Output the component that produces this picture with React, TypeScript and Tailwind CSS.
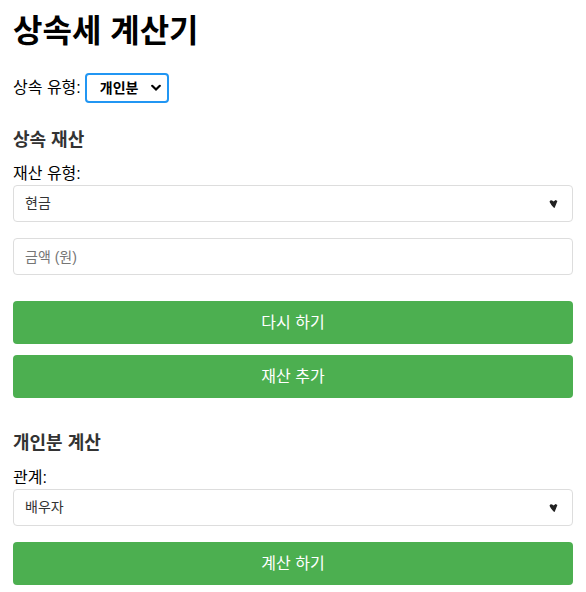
import { useState } from "react";

const font = { fontFamily: '"Liberation Sans", "Noto Sans CJK KR", sans-serif' };

function Arrow() {
  return (
    <svg
      className="pointer-events-none absolute right-[15px] top-1/2 -translate-y-1/2"
      width="9"
      height="9"
      viewBox="0 0 9 9"
    >
      <path d="M0.5 2.2 Q1.5 0 3.6 1.2 L4.6 2 L6.6 0.6 L8.4 1.6 L5.6 8.6 L4.6 8 Q2 5.5 0.5 2.2 Z" fill="#222" />
    </svg>
  );
}

function Select({ value, options }: { value: string; options: string[] }) {
  const [v, setV] = useState(value);
  return (
    <div className="relative">
      <select
        value={v}
        onChange={(e) => setV(e.target.value)}
        className="block h-[37px] w-full appearance-none rounded-[4px] border border-[#dddddd] bg-white pl-[11px] text-[14px] text-[#333] outline-none"
        style={font}
      >
        {options.map((o) => (
          <option key={o}>{o}</option>
        ))}
      </select>
      <Arrow />
    </div>
  );
}

function GreenButton({ label }: { label: string }) {
  return (
    <button className="h-[43px] w-full rounded-[4px] bg-[#4caf50] text-[16px] text-white" style={font}>
      {label}
    </button>
  );
}

export default function App() {
  const [type, setType] = useState("개인분");
  return (
    <div className="flex w-[586px] flex-col bg-white px-[13px] text-black" style={font}>
      <h1 className="mt-[12px] text-[32px] font-bold leading-[38px]">상속세 계산기</h1>

      <div className="mt-[23px] flex items-center gap-[4px] text-[16px]">
        <span>상속 유형:</span>
        <div className="relative">
          <select
            value={type}
            onChange={(e) => setType(e.target.value)}
            className="h-[30px] w-[84px] appearance-none rounded-[4px] border-2 border-[#2196f3] bg-white pl-[13px] text-[14px] font-bold text-black outline-none"
            style={font}
          >
            <option>개인분</option>
            <option>전체분</option>
          </select>
          <svg
            className="pointer-events-none absolute right-[8px] top-1/2 -translate-y-1/2"
            width="10"
            height="7"
            viewBox="0 0 10 7"
          >
            <path d="M1.2 1.2 L5 5 L8.8 1.2" stroke="#000" strokeWidth="2.2" fill="none" strokeLinecap="round" />
          </svg>
        </div>
      </div>

      <h3 className="mt-[26px] text-[18px] font-bold leading-[22px] text-[#333]">상속 재산</h3>

      <label className="mt-[13px] text-[16px] leading-[20px]">재산 유형:</label>
      <div className="mt-[1px]">
        <Select value="현금" options={["현금", "부동산", "주식"]} />
      </div>

      <input
        placeholder="금액 (원)"
        className="mt-[16px] h-[37px] w-full rounded-[4px] border border-[#dddddd] px-[11px] text-[14px] text-[#333] outline-none placeholder:text-[#757575]"
        style={font}
      />

      <div className="mt-[26px] flex flex-col gap-[11px]">
        <GreenButton label="다시 하기" />
        <GreenButton label="재산 추가" />
      </div>

      <h3 className="mt-[34px] text-[18px] font-bold leading-[22px] text-[#333]">개인분 계산</h3>

      <label className="mt-[14px] text-[16px] leading-[20px]">관계:</label>
      <div className="mt-[1px]">
        <Select value="배우자" options={["배우자", "자녀", "부모"]} />
      </div>

      <div className="mt-[16px]">
        <GreenButton label="계산 하기" />
      </div>
    </div>
  );
}
